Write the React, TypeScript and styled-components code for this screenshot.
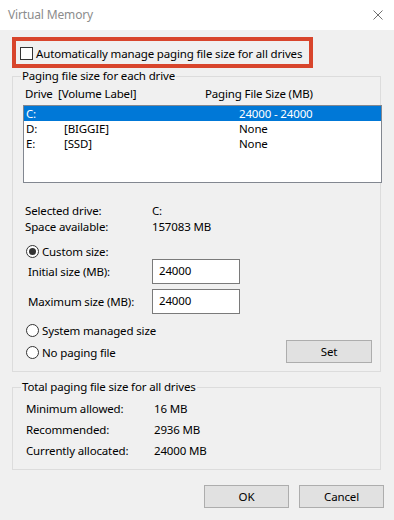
import React from "react";
import styled, { createGlobalStyle } from "styled-components";

const Global = createGlobalStyle`
  html, body { margin: 0; padding: 0; background: #f0f0f0; }
  body {
    font-family: "Noto Sans", "Open Sans", sans-serif;
    font-size: 11.5px;
    letter-spacing: -0.15px;
    color: #000;
  }
  * { box-sizing: border-box; }
`;

const Window = styled.div`
  width: 394px;
  height: 520px;
  background: #f0f0f0;
  display: flex;
  flex-direction: column;
  overflow: hidden;
`;

const TitleBar = styled.div`
  height: 30px;
  flex-shrink: 0;
  background: #fff;
  display: flex;
  align-items: center;
  justify-content: space-between;
  padding: 0 11px 0 8px;
`;

const Title = styled.span`
  color: #8c8c8c;
  font-size: 12px;
  line-height: 16px;
  margin-top: -1px;
`;

const Content = styled.div`
  display: flex;
  flex-direction: column;
  padding: 7px 10px 0 12px;
`;

const Highlight = styled.div`
  width: 301px;
  height: 31px;
  border: 4px solid #d8452c;
  display: flex;
  align-items: center;
  gap: 3px;
  padding: 2px 0 0 4px;
  white-space: nowrap;
`;

const CheckBox = styled.span`
  width: 13px;
  height: 13px;
  flex-shrink: 0;
  border: 1px solid #333;
  background: #fff;
`;

const Group = styled.fieldset<{ $top: number; $bottom: number; $left: number }>`
  margin: ${(p) => p.$top}px 3px 0 0;
  min-width: 0;
  border: 1px solid #dcdcdc;
  padding: 0 0 ${(p) => p.$bottom}px ${(p) => p.$left}px;
  display: flex;
  flex-direction: column;
`;

const Legend = styled.legend<{ $shift: number }>`
  padding: 0 1px;
  margin-left: ${(p) => p.$shift}px;
  line-height: 14px;
  white-space: nowrap;
`;

const HeaderRow = styled.div`
  margin-top: 3px;
  height: 15px;
  line-height: 15px;
  padding-left: 2px;
  display: grid;
  grid-template-columns: 33px 147px 1fr;
  white-space: nowrap;
`;

const ListBox = styled.div`
  margin: 4px -2px 0 0;
  height: 78px;
  border: 1px solid #828790;
  background: #fff;
  display: flex;
  flex-direction: column;
`;

const ListRow = styled.div<{ $selected?: boolean }>`
  height: 15px;
  line-height: 15px;
  padding-left: 2px;
  display: grid;
  grid-template-columns: 38px 175px 1fr;
  white-space: nowrap;
  overflow: hidden;
  background: ${(p) => (p.$selected ? "#0078d7" : "transparent")};
  color: ${(p) => (p.$selected ? "#fff" : "#000")};
`;

const InfoGrid = styled.div<{ $top: number; $row: number; $label: number; $pad: number }>`
  margin-top: ${(p) => p.$top}px;
  padding-left: ${(p) => p.$pad}px;
  display: grid;
  grid-template-columns: ${(p) => p.$label}px 1fr;
  grid-auto-rows: ${(p) => p.$row}px;
  line-height: ${(p) => p.$row}px;
  white-space: nowrap;
`;

const RadioRow = styled.div<{ $top: number }>`
  margin-top: ${(p) => p.$top}px;
  height: 15px;
  padding-left: 3px;
  display: flex;
  align-items: center;
  gap: 3px;
  white-space: nowrap;
`;

const Radio = styled.span<{ $checked?: boolean }>`
  width: 13px;
  height: 13px;
  flex-shrink: 0;
  border: 1px solid #333;
  border-radius: 50%;
  background: #fff;
  display: flex;
  align-items: center;
  justify-content: center;
  &::after {
    content: "";
    width: 7px;
    height: 7px;
    border-radius: 50%;
    background: ${(p) => (p.$checked ? "#333" : "transparent")};
  }
`;

const SizeRow = styled.div<{ $top: number }>`
  margin-top: ${(p) => p.$top}px;
  height: 25px;
  padding-left: 5px;
  display: grid;
  grid-template-columns: 124px 88px;
  align-items: center;
  white-space: nowrap;
`;

const TextBox = styled.input`
  width: 88px;
  height: 25px;
  border: 1px solid #7a7a7a;
  background: #fff;
  font: inherit;
  letter-spacing: inherit;
  color: #000;
  padding: 0 6px 3px;
  outline: none;
`;

const BottomRow = styled.div`
  margin-top: 2px;
  height: 23px;
  display: flex;
  align-items: center;
  justify-content: space-between;
  padding-right: 8px;
`;

const NoPagingRadio = styled(RadioRow)`
  padding-top: 1px;
`;

const Button = styled.button<{ $w: number }>`
  width: ${(p) => p.$w}px;
  height: 23px;
  background: #e1e1e1;
  border: 1px solid #adadad;
  font: inherit;
  letter-spacing: inherit;
  color: #000;
  padding: 0;
  line-height: 21px;
`;

const ButtonBar = styled.div`
  margin-top: 15px;
  display: flex;
  justify-content: flex-end;
  gap: 10px;
`;

const CloseIcon = () => (
  <svg width="10" height="10" viewBox="0 0 10 10">
    <path d="M0.5 0.5 L9.5 9.5 M9.5 0.5 L0.5 9.5" stroke="#6f6f6f" strokeWidth="1" />
  </svg>
);

const drives = [
  { d: "C:", label: "", size: "24000 - 24000", selected: true },
  { d: "D:", label: "[BIGGIE]", size: "None" },
  { d: "E:", label: "[SSD]", size: "None" },
];

export default function App() {
  return (
    <Window>
      <Global />
      <TitleBar>
        <Title>Virtual Memory</Title>
        <CloseIcon />
      </TitleBar>
      <Content>
        <Highlight>
          <CheckBox />
          <span>Automatically manage paging file size for all drives</span>
        </Highlight>

        <Group $top={1} $bottom={8} $left={10}>
          <Legend $shift={-2}>Paging file size for each drive</Legend>
          <HeaderRow>
            <span>Drive</span>
            <span>[Volume Label]</span>
            <span>Paging File Size (MB)</span>
          </HeaderRow>
          <ListBox>
            {drives.map((r) => (
              <ListRow key={r.d} $selected={r.selected}>
                <span>{r.d}</span>
                <span>{r.label}</span>
                <span>{r.size}</span>
              </ListRow>
            ))}
          </ListBox>

          <InfoGrid $top={20} $row={16} $label={127} $pad={2}>
            <span>Selected drive:</span>
            <span>C:</span>
            <span>Space available:</span>
            <span>157083 MB</span>
          </InfoGrid>

          <RadioRow $top={9}>
            <Radio $checked />
            <span>Custom size:</span>
          </RadioRow>
          <SizeRow $top={0}>
            <span>Initial size (MB):</span>
            <TextBox defaultValue="24000" />
          </SizeRow>
          <SizeRow $top={5}>
            <span>Maximum size (MB):</span>
            <TextBox defaultValue="24000" />
          </SizeRow>
          <RadioRow $top={9}>
            <Radio />
            <span>System managed size</span>
          </RadioRow>
          <BottomRow>
            <NoPagingRadio $top={0}>
              <Radio />
              <span>No paging file</span>
            </NoPagingRadio>
            <Button $w={86}>Set</Button>
          </BottomRow>
        </Group>

        <Group $top={8} $bottom={8} $left={13}>
          <Legend $shift={-5}>Total paging file size for all drives</Legend>
          <InfoGrid $top={4} $row={21} $label={128} $pad={0}>
            <span>Minimum allowed:</span>
            <span>16 MB</span>
            <span>Recommended:</span>
            <span>2936 MB</span>
            <span>Currently allocated:</span>
            <span>24000 MB</span>
          </InfoGrid>
        </Group>

        <ButtonBar>
          <Button $w={85}>OK</Button>
          <Button $w={85}>Cancel</Button>
        </ButtonBar>
      </Content>
    </Window>
  );
}
